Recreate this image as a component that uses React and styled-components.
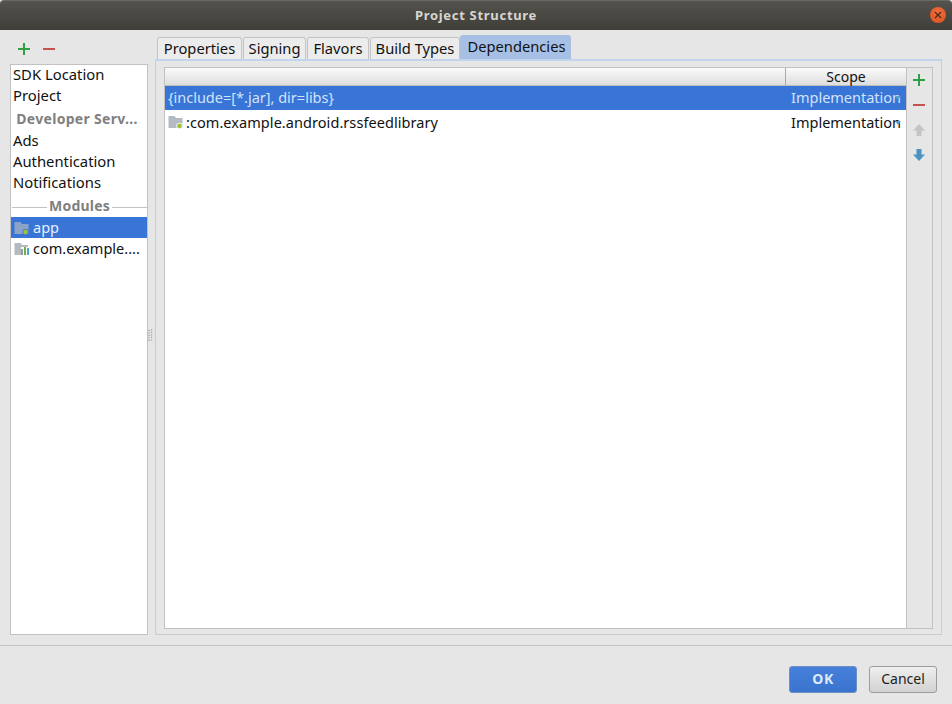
import React from "react";
import styled, { createGlobalStyle } from "styled-components";

const Global = createGlobalStyle`
  html, body { margin: 0; padding: 0; background: #e6e6e6; }
  * { box-sizing: border-box; }
`;
const FONT = `"Noto Sans", "Open Sans", sans-serif`;

const Window = styled.div`
  width: 952px; height: 704px; display: flex; flex-direction: column;
  background: #e6e6e6; font-family: ${FONT}; font-size: 14.5px; color: #111; overflow: hidden;
`;
const TitleBar = styled.div`
  height: 30px; flex: none; position: relative; display: flex; align-items: center; justify-content: center;
  background: linear-gradient(#54524c, #3f3e39); padding-bottom: 2px;
  border-top: 1px solid #6a6862; border-radius: 4px 4px 0 0;
  color: #d8d6d0; font-weight: 700; font-size: 13px; letter-spacing: 0.7px;
`;
const CloseButton = styled.div`
  position: absolute; right: 6px; top: 6px; width: 16px; height: 16px; border-radius: 50%;
  background: radial-gradient(circle at 50% 35%, #f2703e, #d94f1c);
  display: flex; align-items: center; justify-content: center;
`;
const Body = styled.div`
  flex: 1; min-height: 0; display: flex; padding: 0 10px 10px 10px;
`;
const Side = styled.div`
  width: 138px; flex: none; display: flex; flex-direction: column;
`;
const SideTools = styled.div`
  height: 34px; flex: none; display: flex; align-items: center; gap: 11px; padding: 4px 0 0 7px;
`;
const SideList = styled.div`
  flex: 1; background: #fff; border: 1px solid #c2c2c2; font-size: 14.8px;
`;
const SideItem = styled.div`
  height: 21px; display: flex; align-items: center; gap: 3px;
  padding: ${p => p.$icon ? "0 0 2px 3px" : "0 0 4px 2px"};
  white-space: nowrap; overflow: hidden;
  background: ${p => p.$selected ? "#3875d7" : "transparent"};
  color: ${p => p.$selected ? "#e8f0fb" : "#111"};
  font-size: ${p => p.$icon ? "14.5px" : "inherit"};
  svg { margin-top: 2px; }
`;
const SideHead = styled.div`
  height: 24px; display: flex; align-items: center; justify-content: center; padding: 0 4px 1px 0;
  color: #808080; font-weight: 700; font-size: 14px; letter-spacing: 0.3px; white-space: nowrap; overflow: hidden;
`;
const ModuleHead = styled.div`
  height: 22px; display: flex; align-items: center; gap: 2px; margin-top: 1px; padding: 0 0 2px 1px;
  color: #808080; font-weight: 700; font-size: 14px; letter-spacing: 0.2px;
  &::before, &::after { content: ""; height: 1px; background: #c2c2c2; flex: 1; margin-top: 5px; }
`;
const Splitter = styled.div`
  width: 7px; flex: none; display: flex; align-items: center; justify-content: center; padding: 4px 2px 0 0;
`;
const Main = styled.div`
  flex: 1; min-width: 0; display: flex; flex-direction: column;
`;
const Tabs = styled.div`
  height: 29px; flex: none; display: flex; align-items: flex-end; gap: 1px; padding-left: 2px; font-size: 14.7px;
`;
const Tab = styled.div`
  height: ${p => p.$active ? "24px" : "22px"}; width: ${p => p.$w}px; display: flex; align-items: center; justify-content: center;
  border: 1px solid ${p => p.$active ? "#a9bfdc" : "#c4c4c4"}; border-bottom: none; border-radius: 3px 3px 0 0;
  background: ${p => p.$active ? "#a6c0e5" : "#ececec"}; white-space: nowrap;
  padding: ${p => p.$active ? "0 0 4px 2px" : "0 0 1px 0"};
  margin-left: ${p => p.$active ? "-1px" : "0"};
`;
const Panel = styled.div`
  flex: 1; min-height: 0; display: flex; padding: 6px 8px 5px 8px;
  border: 1px solid #cccccc; border-top: 2px solid #c3d5ec;
`;
const Table = styled.div`
  flex: 1; min-width: 0; display: flex; flex-direction: column; background: #fff;
  border: 1px solid #c2c2c2;
`;
const HeaderRow = styled.div`
  height: 18px; flex: none; display: flex; background: linear-gradient(#fafafa, #dedede); border-bottom: 1px solid #bdbdbd;
`;
const HeaderMain = styled.div`
  flex: 1; border-right: 1px solid #aaa;
`;
const HeaderScope = styled.div`
  width: 120px; flex: none; text-align: center; line-height: 18px; font-size: 14px;
`;
const Row = styled.div`
  height: ${p => p.$h}px; flex: none; display: flex; align-items: center; white-space: nowrap; padding-bottom: 2px;
  background: ${p => p.$selected ? "#3875d7" : "#fff"};
  color: ${p => p.$selected ? "#d3e3fa" : "#111"};
`;
const RowName = styled.div`
  flex: 1; display: flex; align-items: center; gap: 2px; padding-left: 3px; letter-spacing: ${p => p.$track || 0}px;
`;
const RowScope = styled.div`
  width: 115px; flex: none; padding-right: 5px; overflow: hidden; position: relative;
`;
const ComboMark = styled.span`
  position: absolute; right: 5px; top: 50%; margin-top: -1px; width: 0; height: 0;
  border-left: 3px solid transparent; border-right: 3px solid transparent; border-top: 4px solid #5b9fc9;
`;
const TableTools = styled.div`
  width: 26px; flex: none; display: flex; flex-direction: column; align-items: center; gap: 11px; padding: 5px 2px 0 0;
  border: 1px solid #c2c2c2; border-left: none;
`;
const Footer = styled.div`
  height: 59px; flex: none; border-top: 1px solid #c4c4c4; display: flex; justify-content: flex-end; align-items: flex-start;
  gap: 12px; padding: 20px 15px 0 0;
`;
const Button = styled.div`
  height: 27px; width: ${p => p.$w}px; display: flex; align-items: center; justify-content: center; border-radius: 3px; padding-bottom: 2px;
  border: 1px solid ${p => p.$primary ? "#6d8fc4" : "#9c9c9c"};
  background: ${p => p.$primary ? "linear-gradient(#4680db, #3a74cf)" : "linear-gradient(#efefef, #d2d2d2)"};
  color: ${p => p.$primary ? "#dfe9f8" : "#222"}; font-weight: ${p => p.$primary ? 700 : 400};
  font-size: 14px; letter-spacing: ${p => p.$primary ? "0.6px" : "0"};
`;
const Label = styled.span`
  overflow: hidden;
`;

const Plus = () => (
  <svg width="14" height="14" viewBox="0 0 14 14"><path d="M7 1v12M1 7h12" stroke="#2f9e44" strokeWidth="2" /></svg>
);
const Minus = () => (
  <svg width="14" height="14" viewBox="0 0 14 14"><path d="M1 7h12" stroke="#c4534c" strokeWidth="2" /></svg>
);
const ArrowUp = () => (
  <svg width="14" height="14" viewBox="0 0 14 14"><path d="M7 1L13 7.5H9.5V13H4.5V7.5H1Z" fill="#c4c4c4" /></svg>
);
const ArrowDown = () => (
  <svg width="14" height="14" viewBox="0 0 14 14"><path d="M7 13L13 6.5H9.5V1H4.5V6.5H1Z" fill="#4a94c4" /></svg>
);
const Folder = ({ selected }) => (
  <svg width="16" height="14" viewBox="0 0 16 14" style={{ flex: "none" }}>
    <path d="M0.5 1h6l1.5 2H14.5v10H0.5Z" fill={selected ? "#8aa3c6" : "#b3bac2"} />
    <circle cx="11.5" cy="11" r="3.2" fill={selected ? "#3875d7" : "#fff"} />
    <circle cx="11.5" cy="11" r="2.4" fill="#9ec23c" />
  </svg>
);
const Library = () => (
  <svg width="16" height="14" viewBox="0 0 16 14" style={{ flex: "none" }}>
    <path d="M0.5 1h6l1.5 2H14v2H7v8H0.5Z" fill="#b3bac2" />
    <rect x="7" y="7" width="2" height="6" fill="#9a9a9a" />
    <rect x="10" y="5" width="2" height="8" fill="#6fb04b" />
    <rect x="13" y="6" width="2" height="7" fill="#4aa8d8" />
  </svg>
);
const Grip = () => (
  <svg width="6" height="16" viewBox="0 0 6 16">
    {[1, 4, 7, 10, 13].map(y => (
      <g key={y} fill="#a0a0a0"><rect x="0.5" y={y + 0.8} width="1.5" height="1.5" /><rect x="3.5" y={y} width="1.5" height="1.5" /></g>
    ))}
  </svg>
);

export default function App() {
  return (
    <Window>
      <Global />
      <TitleBar>
        Project Structure
        <CloseButton>
          <svg width="8" height="8" viewBox="0 0 8 8"><path d="M1 1l6 6M7 1L1 7" stroke="#4a2a1c" strokeWidth="1.3" /></svg>
        </CloseButton>
      </TitleBar>
      <Body>
        <Side>
          <SideTools><Plus /><Minus /></SideTools>
          <SideList>
            <SideItem>SDK Location</SideItem>
            <SideItem>Project</SideItem>
            <SideHead>Developer Serv...</SideHead>
            <SideItem>Ads</SideItem>
            <SideItem>Authentication</SideItem>
            <SideItem>Notifications</SideItem>
            <ModuleHead>Modules</ModuleHead>
            <SideItem $icon $selected><Folder selected /><Label>app</Label></SideItem>
            <SideItem $icon><Library /><Label>com.example....</Label></SideItem>
          </SideList>
        </Side>
        <Splitter><Grip /></Splitter>
        <Main>
          <Tabs>
            <Tab $w={85}>Properties</Tab>
            <Tab $w={63}>Signing</Tab>
            <Tab $w={62}>Flavors</Tab>
            <Tab $w={90}>Build Types</Tab>
            <Tab $w={111} $active>Dependencies</Tab>
          </Tabs>
          <Panel>
            <Table>
              <HeaderRow><HeaderMain /><HeaderScope>Scope</HeaderScope></HeaderRow>
              <Row $h={24} $selected>
                <RowName>{"{include=[*.jar], dir=libs}"}</RowName>
                <RowScope>Implementation<ComboMark /></RowScope>
              </Row>
              <Row $h={25}>
                <RowName $track={0.06}><Folder />:com.example.android.rssfeedlibrary</RowName>
                <RowScope>Implementation<ComboMark /></RowScope>
              </Row>
            </Table>
            <TableTools>
              <Plus />
              <Minus />
              <ArrowUp />
              <ArrowDown />
            </TableTools>
          </Panel>
        </Main>
      </Body>
      <Footer>
        <Button $primary $w={68}>OK</Button>
        <Button $w={68}>Cancel</Button>
      </Footer>
    </Window>
  );
}
